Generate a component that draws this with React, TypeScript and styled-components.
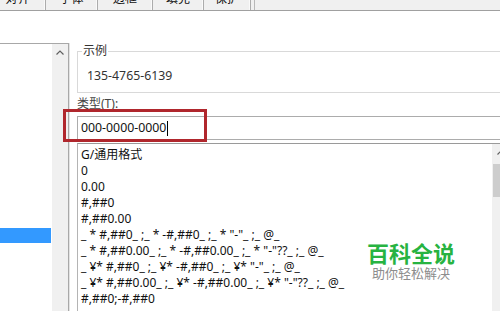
import styled, { createGlobalStyle } from 'styled-components';

const GlobalStyle = createGlobalStyle`
  html, body { margin: 0; padding: 0; background: #fff; }
  body { font-family: "Noto Sans", "Noto Sans CJK SC", sans-serif; }
`;

const Window = styled.div`
  position: relative;
  width: 500px;
  height: 311px;
  overflow: hidden;
  background: #fff;
  display: flex;
  flex-direction: column;
`;

const TabBar = styled.div`
  flex: none;
  display: flex;
  align-items: flex-end;
  height: 10px;
  margin-left: -10px;
  overflow: hidden;
  background: #f0f0f0;
  border-bottom: 1px solid #a0a0a0;
`;

const Tab = styled.div<{ $w: number }>`
  flex: none;
  box-sizing: border-box;
  width: ${p => p.$w}px;
  height: 22px;
  padding-top: 3px;
  line-height: 16px;
  text-align: center;
  font-size: 12px;
  color: #111;
  border-right: 1px solid #acacac;
  box-shadow: inset -1px 0 0 #fafafa;
`;

const TabRest = styled.div`
  flex: 1;
  height: 22px;
  margin-left: 3px;
  border-left: 1px solid #b8b8b8;
`;

const Body = styled.div`
  flex: 1;
  display: flex;
  min-height: 0;
`;

const LeftPane = styled.div`
  flex: none;
  width: 69px;
  padding-top: 32px;
  display: flex;
`;

const CategoryList = styled.div`
  flex: 1;
  display: flex;
  margin-left: -60px;
  border-top: 1px solid #a8a8a8;
  border-right: 1px solid #a8a8a8;
  box-shadow: 1px 0 0 #e3e3e3;
`;

const CategoryItems = styled.div`
  flex: 1;
  padding-top: 8px;
  font-size: 12px;
`;

const CategoryRow = styled.div<{ $selected?: boolean }>`
  height: 16px;
  line-height: 15px;
  padding-left: 3px;
  margin-right: 1px;
  color: ${p => (p.$selected ? '#fff' : '#000')};
  background: ${p => (p.$selected ? '#3399ff' : 'transparent')};
  background-clip: content-box;
  box-sizing: border-box;
  padding-bottom: 1px;
`;

const ScrollBar = styled.div<{ $w: number }>`
  flex: none;
  width: ${p => p.$w}px;
  background: #f0f0f0;
  display: flex;
  flex-direction: column;
  align-items: center;
`;

const ArrowBox = styled.div`
  height: 17px;
  width: 100%;
  display: flex;
  align-items: center;
  justify-content: center;
`;

const Thumb = styled.div<{ $top: number; $h: number }>`
  margin-top: ${p => p.$top}px;
  height: ${p => p.$h}px;
  width: calc(100% - 2px);
  background: #cdcdcd;
`;

const RightPane = styled.div`
  flex: 1;
  min-width: 0;
  margin-right: -9px;
  padding: 33px 0 0 8px;
  display: flex;
  flex-direction: column;
  font-size: 12px;
  color: #333;
`;

const SampleGroup = styled.fieldset`
  margin: 0;
  padding: 10px 0 8px 9px;
  border: 1px solid #d9d9d9;
  min-width: 0;
`;

const Legend = styled.legend`
  margin-left: -5px;
  padding: 0 1px;
  line-height: 14px;
  color: #333;
`;

const SampleValue = styled.div`
  line-height: 16px;
  font-size: 12.3px;
  color: #333;
`;

const FieldLabel = styled.div`
  margin-top: 4px;
  line-height: 14px;
  color: #444;
  u { text-decoration: underline; }
`;

const CodeInput = styled.div`
  margin-top: 5px;
  height: 24px;
  box-sizing: border-box;
  border: 1px solid #acacac;
  padding-left: 3px;
  line-height: 22px;
  font-size: 12.3px;
  color: #111;
  display: flex;
  align-items: center;
`;

const Caret = styled.span`
  display: inline-block;
  width: 1px;
  height: 15px;
  margin-left: 1px;
  background: #000;
`;

const FormatList = styled.div`
  flex: 1;
  min-height: 0;
  margin-top: 3px;
  display: flex;
  border-top: 1px solid #9a9a9a;
  border-left: 1px solid #b4b4b4;
`;

const FormatItems = styled.div`
  flex: 1;
  padding: 3px 0 0 3px;
  overflow: hidden;
`;

const FormatRow = styled.div`
  height: 16px;
  line-height: 16px;
  white-space: pre;
  color: #111;
  font-size: 12px;
`;

const Highlight = styled.div`
  position: absolute;
  left: 63px;
  top: 109px;
  width: 144px;
  height: 33px;
  box-sizing: border-box;
  border: 3px solid #b0272d;
  pointer-events: none;
`;

const Watermark = styled.div`
  position: absolute;
  left: 362px;
  top: 240px;
  width: 98px;
  display: flex;
  flex-direction: column;
  align-items: center;
  gap: 1px;
  pointer-events: none;
`;

const MarkTitle = styled.div`
  font-family: "Noto Sans CJK SC", sans-serif;
  font-size: 22px;
  font-weight: 700;
  line-height: 24px;
  color: #27b341;
`;

const MarkSub = styled.div`
  font-family: "Noto Sans CJK SC", sans-serif;
  font-size: 13px;
  line-height: 15px;
  color: #8d8d8d;
`;

const UpArrow = () => (
  <svg width="8" height="5" viewBox="0 0 8 5">
    <path d="M0.5 4.5 L4 1 L7.5 4.5" fill="none" stroke="#606060" strokeWidth="1.2" />
  </svg>
);

const tabs = [
  { label: '对齐', w: 56 },
  { label: '字体', w: 52 },
  { label: '边框', w: 55 },
  { label: '填充', w: 51 },
  { label: '保护', w: 47 },
];

const categories = ['常规', '数值', '货币', '会计专用', '日期', '时间', '百分比', '分数', '科学记数', '文本', '特殊', '自定义'];

const formats = [
  'G/通用格式',
  '0',
  '0.00',
  '#,##0',
  '#,##0.00',
  '_ * #,##0_ ;_ * -#,##0_ ;_ * "-"_ ;_ @_',
  '_ * #,##0.00_ ;_ * -#,##0.00_ ;_ * "-"??_ ;_ @_',
  '_ ¥* #,##0_ ;_ ¥* -#,##0_ ;_ ¥* "-"_ ;_ @_',
  '_ ¥* #,##0.00_ ;_ ¥* -#,##0.00_ ;_ ¥* "-"??_ ;_ @_',
  '#,##0;-#,##0',
];

export default function App() {
  return (
    <Window>
      <GlobalStyle />
      <TabBar>
        {tabs.map(t => (
          <Tab key={t.label} $w={t.w}>{t.label}</Tab>
        ))}
        <TabRest />
      </TabBar>
      <Body>
        <LeftPane>
          <CategoryList>
            <CategoryItems>
              {categories.map((c, i) => (
                <CategoryRow key={c} $selected={i === 11}>{c}</CategoryRow>
              ))}
            </CategoryItems>
            <ScrollBar $w={16}>
              <ArrowBox><UpArrow /></ArrowBox>
            </ScrollBar>
          </CategoryList>
        </LeftPane>
        <RightPane>
          <SampleGroup>
            <Legend>示例</Legend>
            <SampleValue>135-4765-6139</SampleValue>
          </SampleGroup>
          <FieldLabel>类型(<u>T</u>):</FieldLabel>
          <CodeInput>
            000-0000-0000<Caret />
          </CodeInput>
          <FormatList>
            <FormatItems>
              {formats.map(f => (
                <FormatRow key={f}>{f}</FormatRow>
              ))}
            </FormatItems>
            <ScrollBar $w={17}>
              <ArrowBox><UpArrow /></ArrowBox>
              <Thumb $top={3} $h={33} />
            </ScrollBar>
          </FormatList>
        </RightPane>
      </Body>
      <Highlight />
      <Watermark>
        <MarkTitle>百科全说</MarkTitle>
        <MarkSub>助你轻松解决</MarkSub>
      </Watermark>
    </Window>
  );
}
